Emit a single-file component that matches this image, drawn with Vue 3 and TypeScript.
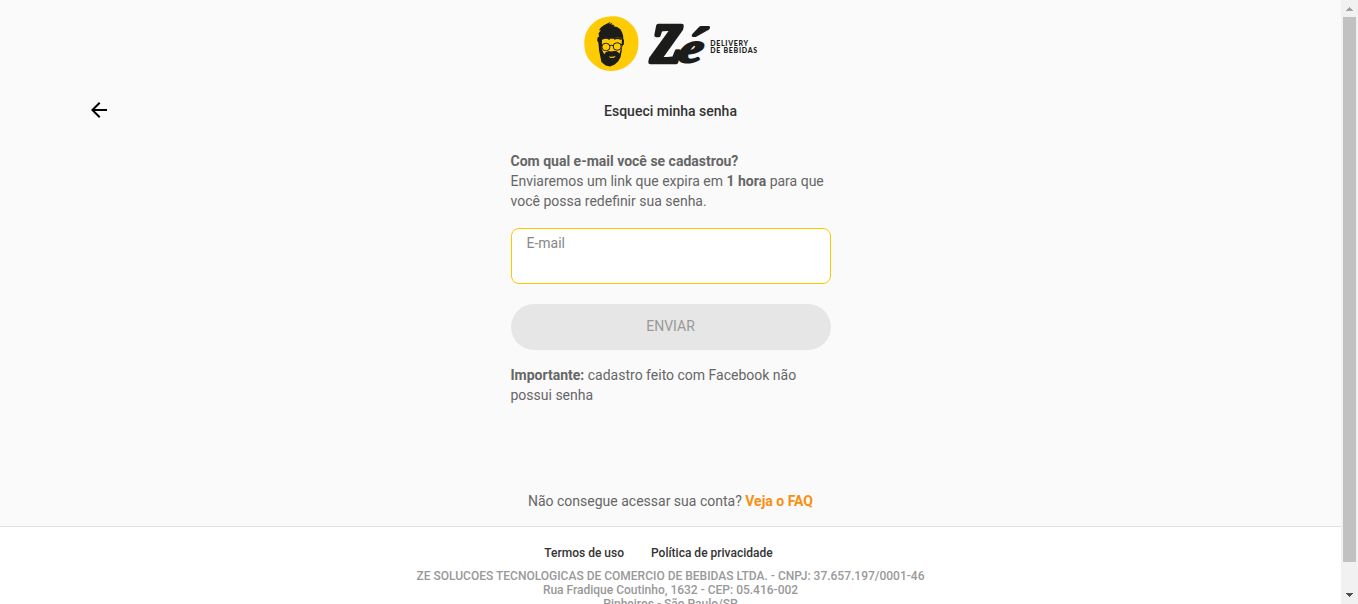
<script setup lang="ts">
import { ref } from 'vue'

const email = ref<string>('')
const company: string[] = [
  'ZE SOLUCOES TECNOLOGICAS DE COMERCIO DE BEBIDAS LTDA. - CNPJ: 37.657.197/0001-46',
  'Rua Fradique Coutinho, 1632 - CEP: 05.416-002',
  'Pinheiros - São Paulo/SP',
]
</script>

<template>
  <div class="window">
    <div class="page">
      <header class="brand">
        <svg class="logo" width="176" height="58" viewBox="583 15 176 58" role="img" aria-label="Zé Delivery de Bebidas">
          <path fill="#ffcb05" d="M610 16.500c8-.8 15 1.700 20.500 7 5.700 5 8.200 11.500 7.900 19.500-.1 8.200-2.500 15-7.900 20-5.500 5.700-12 7.800-19.500 7.900-7.500 0-13.200-2.700-18.500-7.700-5.700-5.200-8-11.500-8.200-19-.2-8 2.200-14.500 7.700-20 5.300-5.200 11-7.200 18-7.700z" />
          <path fill="#1c1c1a" d="M599 50l-.5-7-1.400-2.800.7-3.100 1.400-.4-.7-3.200 2.300-3.500-1.800.2 1.800-2.600 3-2.400 7-3.400-1.800 2.400 3.500-1.500-1.200 1.800 3.300.5-1.200 1.300 3.800.7 3.200 2.300 1.500 2.700 1.200 3.500.2 3.300.8 1.700-.4 3.500-1.600 2.800-.4 4.200-1.100 6-2.500 4.400-3.700 3.300-4.300 1.900-4.400-1-4.300-3.600z" />
          <path fill="#ffcb05" d="M602 39c3-1.900 5.700-1.600 8-.2l3.500-.1c2.600-1.600 5-1.500 7.200-.6l1.200 2.300-.6 7.800-1.900 5.500c-1.500-2-4-3-6.300-2.500l-1.600.6-2.700-.5c-2.400.1-3.700 1.200-4.400 3.200l-2.600-5z" />
          <g fill="none" stroke="#1c1c1a">
            <path stroke-width="1.500" d="M602 39.200c2.800-1.700 5.400-1.400 7.800.1M614 39.200c2.400-1.400 4.700-1.300 7 .1" />
            <rect x="602" y="43.400" width="7.800" height="7.200" rx="3.200" stroke-width="1" />
            <rect x="613.300" y="42.900" width="7.800" height="7.200" rx="3.200" stroke-width="1" />
            <path stroke-width="1" d="M598.700 44l3.500 1M609.800 45.800q1.800-1 3.600-.2M621 44.600l3-.8" />
          </g>
          <path fill="#1c1c1a" d="M604.500 53.800l4-2.300 3.700.2 3.800-.6 3.200 2.400-4 1.500-5.500.2z" />
          <path fill="#ffcb05" d="M608.500 56.200q3.500 1.400 7.300-.4l-1.600 2-3.800.3z" />
          <g class="script" fill="#1c1c1a" stroke="#1c1c1a" stroke-linejoin="round">
            <text transform="translate(650.500 61.600) skewX(-2) scale(.93 1)" font-size="55" stroke-width="4.500">Z</text>
            <text transform="translate(677 61.800) skewX(-12) scale(1.270 1)" font-size="42" stroke-width="2.400">e</text>
            <text transform="translate(680 65) skewX(-12) scale(1.050 1)" font-size="54" stroke-width="3">´</text>
          </g>
          <g class="tagline" fill="#1c1c1a">
            <text x="710.200" y="45.900" textLength="38" lengthAdjust="spacing">DELIVERY</text>
            <text x="710.200" y="53.400" textLength="47" lengthAdjust="spacing">DE BEBIDAS</text>
          </g>
        </svg>
      </header>

      <div class="heading">
        <button class="back" type="button" aria-label="Voltar">
          <svg width="24" height="24" viewBox="0 0 24 24"><path d="M20 11H7.830l5.590-5.590L12 4l-8 8 8 8 1.410-1.410L7.830 13H20z" /></svg>
        </button>
        <h1>Esqueci minha senha</h1>
      </div>

      <main class="form">
        <p><strong>Com qual e-mail você se cadastrou?</strong><br />Enviaremos um link que expira em <strong>1 hora</strong> para que você possa redefinir sua senha.</p>
        <label class="field">
          <span>E-mail</span>
          <input v-model="email" type="email" />
        </label>
        <button class="submit" type="button" disabled>ENVIAR</button>
        <p><strong>Importante:</strong> cadastro feito com Facebook não possui senha</p>
      </main>

      <p class="faq">Não consegue acessar sua conta? <a>Veja o FAQ</a></p>

      <footer class="footer">
        <nav><a>Termos de uso</a><a>Política de privacidade</a></nav>
        <div v-for="line in company" :key="line" class="line">{{ line }}</div>
      </footer>
    </div>

    <div class="scrollbar">
      <svg width="17" height="17" viewBox="0 0 17 17" shape-rendering="crispEdges"><path fill="#a3a3a3" d="M8 7h1v1h1v1h1v1h1v1H5v-1h1V9h1V8h1z" /></svg>
      <div class="thumb"></div>
      <svg width="17" height="17" viewBox="0 0 17 17" shape-rendering="crispEdges"><path fill="#505050" d="M5 6h7v1h-1v1h-1v1H9v1H8V9H7V8H6V7H5z" /></svg>
    </div>
  </div>
</template>

<style>
html, body { margin: 0; height: 100%; overflow: hidden; }
</style>

<style scoped>
.window {
  display: flex;
  height: 604px;
  overflow: hidden;
  background: #fafafa;
  font-family: Roboto, sans-serif;
  font-size: 14px;
  line-height: 20px;
  color: #666;
}
.page { width: 1341px; height: 604px; overflow: hidden; display: flex; flex-direction: column; }
.brand { height: 73px; flex: none; padding-top: 15px; box-sizing: border-box; display: flex; justify-content: center; }
.logo { flex: none; overflow: visible; }
.script { font-family: "Liberation Serif", serif; font-weight: 700; font-style: italic; }
.tagline { font-family: Lato, sans-serif; font-weight: 900; font-size: 7px; }
.heading { flex: none; display: grid; grid-template-columns: 87px 24px 1fr 111px; align-items: center; height: 24px; margin-top: 25px; }
.back { grid-column: 2; width: 24px; height: 24px; padding: 0; border: 0; background: none; }
.back svg { display: block; }
h1 { grid-column: 3; margin: 2px 0 0; font-size: 14px; line-height: 20px; font-weight: 500; color: #333; text-align: center; }
.form { flex: none; width: 320px; margin: 29px auto 0; }
.form p { margin: 0; }
strong { font-weight: 700; }
.field { display: block; box-sizing: border-box; height: 56px; margin: 17px 0 20px; padding: 4px 15px; border: 1px solid #ffc800; border-radius: 8px; background: #fff; color: #888; }
.field span { display: block; }
.field input { display: block; width: 100%; height: 24px; padding: 0; border: 0; outline: 0; background: none; font: inherit; }
.submit { display: block; width: 320px; height: 46px; margin: 0 0 15px; padding: 0 0 2px; border: 0; border-radius: 23px; background: #e6e6e6; color: #999; font: 400 14px/20px Roboto, sans-serif; }
.faq { flex: none; margin: 86px 0 15px; text-align: center; }
.faq a { color: #f78f0f; font-weight: 700; }
.footer { flex: none; height: 100px; border-top: 1px solid #e0e0e0; background: #fff; text-align: center; font-size: 12px; line-height: 14px; font-weight: 500; color: #999; }
.footer nav { display: flex; justify-content: center; gap: 27px; margin: 19px 24px 9px 0; color: #333; }
.scrollbar { width: 17px; height: 604px; flex: none; display: flex; flex-direction: column; background: #f1f1f1; }
.scrollbar svg { display: block; flex: none; }
.thumb { flex: none; width: 13px; height: 545px; margin: 0 2px 25px; background: #c1c1c1; }
</style>
